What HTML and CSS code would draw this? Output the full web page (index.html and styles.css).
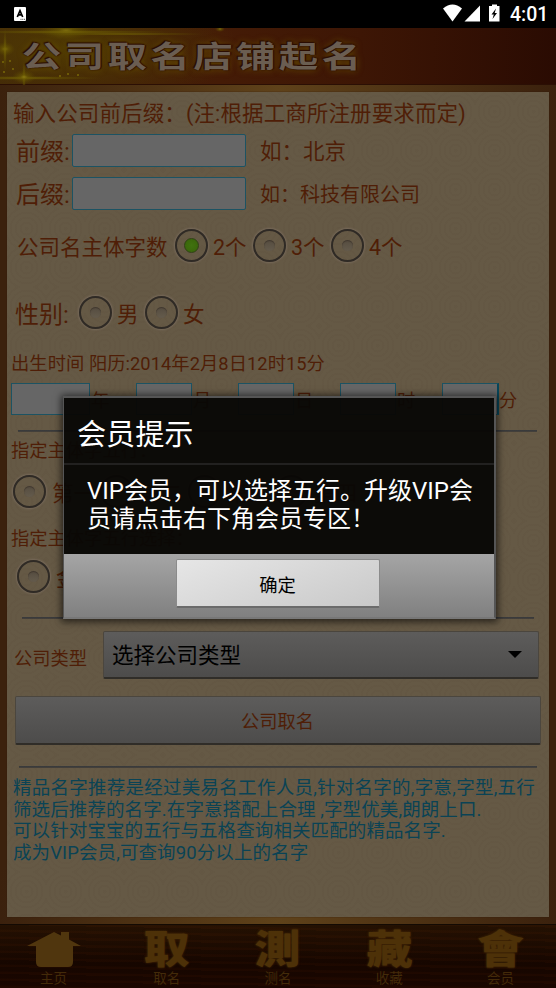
FILE: index.html
```html
<!DOCTYPE html>
<html lang="zh-CN">
<head>
<meta charset="utf-8">
<title>公司取名店铺起名</title>
<link rel="stylesheet" href="styles.css">
</head>
<body>
<div class="screen">
  <div class="status">
    <svg class="ime" width="12" height="14" viewBox="0 0 12 14"><rect width="12" height="14" rx="1" fill="#fff"/><path d="M3.3 10 6 3.6 8.7 10M4.3 7.9h3.4" fill="none" stroke="#000" stroke-width="1.7"/><path d="M6.5 12.3h1m.8 0h1m.8 0h1" stroke="#333" stroke-width="1"/></svg>
    <svg class="sys" width="60" height="20" viewBox="0 0 60 20"><path d="M0 4.5Q9.500-3.500 19 4.500L9.500 17.500Z" fill="#fff"/><path d="M37 1.500V17.500H21.500Z" fill="#fff"/><path d="M46 2h3V.500h5V2h2.500v15.500H46Z" fill="#fff"/><path d="M53 4.500 48.500 10.500h2.300L49.500 15l4.500-6h-2.300Z" fill="#000"/></svg>
    <span class="clock">4:01</span>
  </div>
  <header class="head">
    <svg class="spark" width="240" height="57" viewBox="0 0 240 57">
      <defs>
        <radialGradient id="g"><stop offset="0" stop-color="#8a7a12"/><stop offset=".3" stop-color="#6b5a04" stop-opacity=".7"/><stop offset="1" stop-color="#5a4a00" stop-opacity="0"/></radialGradient>
      </defs>
      <ellipse cx="66" cy="3" rx="26" ry="9" fill="url(#g)"/>
      <ellipse cx="66" cy="4" rx="110" ry="2" fill="url(#g)"/>
      <ellipse cx="120" cy="6" rx="90" ry="1.500" fill="url(#g)"/>
      <ellipse cx="24" cy="50" rx="80" ry="2" fill="url(#g)"/>
      <ellipse cx="24" cy="49" rx="2" ry="16" fill="url(#g)"/>
      <ellipse cx="24" cy="49" rx="12" ry="7" fill="url(#g)"/>
      <ellipse cx="5" cy="21" rx="10" ry="7" fill="url(#g)"/>
      <ellipse cx="5" cy="22" rx="2" ry="22" fill="url(#g)"/>
      <ellipse cx="220" cy="1" rx="5" ry="3" fill="url(#g)"/>
      <g fill="#786809"><circle cx="3" cy="34" r="1"/><circle cx="10" cy="33" r="1"/><circle cx="13" cy="41" r="1"/><circle cx="4" cy="44" r="1"/><circle cx="60" cy="48" r="1"/><circle cx="68" cy="46" r="1"/><circle cx="78" cy="47" r="1"/></g>
    </svg>
    <h1 class="title">公司取名店铺起名</h1>
  </header>
  <main class="wood">
    <form class="panel">
      <p class="intro">输入公司前后缀：(注:根据工商所注册要求而定)</p>
      <div class="row name"><span class="lab">前缀:</span><span class="input"></span><span class="t22 hint">如：北京</span></div>
      <div class="row name second"><span class="lab">后缀:</span><span class="input"></span><span class="t20 hint">如：科技有限公司</span></div>
      <div class="row count"><span class="t22 cap">公司名主体字数</span>
        <i class="radio on"></i><span class="t22 opt">2个</span><i class="radio"></i><span class="t22 opt">3个</span><i class="radio"></i><span class="t22 opt">4个</span></div>
      <div class="row sex"><span class="lab">性别:</span>
        <i class="radio"></i><span class="t22 opt">男</span><i class="radio"></i><span class="t22 opt">女</span></div>
      <p class="t18 birth">出生时间 阳历:2014年2月8日12时15分</p>
      <div class="row date t18">
        <span class="cell year"><i class="input"></i>年</span><span class="cell"><i class="input"></i>月</span><span class="cell"><i class="input"></i>日</span><span class="cell"><i class="input"></i>时</span><span class="cell last"><i class="input"></i>分</span></div>
      <div class="rule r1"></div>
      <p class="t18 sub">指定主体字五行：</p>
      <div class="row pos"><i class="radio"></i><span class="t22">第一</span><i class="radio"></i><span class="t22">第二</span><i class="radio"></i><span class="t22">第三</span><i class="radio"></i><span class="t22">第四</span></div>
      <p class="t18 sub sub2">指定主体字五行选择：</p>
      <div class="row elem"><i class="radio"></i><span class="t22">金</span></div>
      <div class="rule r2"></div>
      <div class="row type"><span class="t18">公司类型</span>
        <div class="select"><span>选择公司类型</span><svg width="14" height="7" viewBox="0 0 14 7"><path d="M0 0h14L7 7Z" fill="#000"/></svg></div></div>
      <div class="submit t18">公司取名</div>
      <div class="rule r3"></div>
      <p class="note"><span class="wide">精品名字推荐是经过美易名工作人员,针对名字的,字意,字型,五行</span><br>筛选后推荐的名字.在字意搭配上合理 ,字型优美,朗朗上口.<br>可以针对宝宝的五行与五格查询相关匹配的精品名字.<br>成为VIP会员,可查询90分以上的名字</p>
    </form>
  </main>
  <nav class="tabs">
    <div class="tab home"><svg width="54" height="38" viewBox="0 0 54 38"><path d="M0 15 27 1l7 3.500V1h8v7.500L54 15h-8v16q0 5-5 5H14q-5 0-5-5V15Z" fill="#50360e"/></svg><small>主页</small></div>
    <div class="tab"><b>取</b><small>取名</small></div>
    <div class="tab"><b>測</b><small>测名</small></div>
    <div class="tab"><b>藏</b><small>收藏</small></div>
    <div class="tab"><b>會</b><small>会员</small></div>
  </nav>
  <div class="dialog">
    <div class="dtitle">会员提示</div>
    <div class="dmsg">VIP会员，可以选择五行。升级VIP会员请点击右下角会员专区！</div>
    <div class="dfoot"><div class="ok">确定</div></div>
  </div>
</div>
</body>
</html>
```
FILE: styles.css
```css
* { box-sizing: border-box; }
body { margin: 0; background: #000; font-family: Roboto, "Noto Sans CJK SC", sans-serif; }
p, h1 { margin: 0; font-weight: 400; }
.screen { position: relative; width: 556px; height: 988px; overflow: hidden; display: flex; flex-direction: column; }

.status { height: 28px; display: flex; align-items: center; padding: 0 11px 0 14px; color: #fff; }
.sys { margin-left: auto; }
.clock { font-size: 19.5px; font-weight: 500; margin-left: 7px; width: 35px; line-height: 28px; padding-top: 1px; white-space: nowrap; }

.head { height: 57px; position: relative; display: flex; align-items: center; padding-left: 22px;
  background: radial-gradient(ellipse 180px 60px at 60px 20px, #4f3a03, rgba(79,58,3,0)), linear-gradient(90deg, #40250a, #441b06 40%, #3d1605 65%, #2a0b02);
  border-bottom: 1px solid #2b0f04; }
.spark { position: absolute; left: 0; top: 0; }
.title { position: relative; font-size: 34px; line-height: 44px; font-weight: 700; letter-spacing: 2.9px; white-space: nowrap;
  transform: scale(1.16, .88); transform-origin: 0 50%;
  color: #6a5d51; text-shadow: 0 0 2px #2a0d04, 1px 1px 1px #2a0d04, -1px -1px 1px #2a0d04, 0 0 7px #6a5203; }

.wood { height: 839px; padding: 7px; background: linear-gradient(#0000 12px, #3b210d 60px, #3b210d 780px, #0000 828px) 0 0 / 7px 100% no-repeat, linear-gradient(#0000 12px, #3b210d 60px, #3b210d 780px, #0000 828px) 100% 0 / 7px 100% no-repeat, linear-gradient(90deg, #3b210d, #5f421a 50%, #3b210d); }
.panel { height: 825px; padding: 0 4px; color: #4f1e07; box-shadow: 0 0 1px #2f1b0c;
  background: repeating-radial-gradient(circle at 50% 50%, rgba(50,35,15,.03) 0 2px, rgba(0,0,0,0) 2px 5px) 0 0 / 39px 39px, #655945; }
.t18, .t20, .t22 { white-space: nowrap; }
.t18 { font-size: 18.3px; }
.t20 { font-size: 20px; }
.t22 { font-size: 21.5px; }
.lab { font-size: 24px; white-space: nowrap; }
.row { display: flex; align-items: center; }
.intro { height: 42px; line-height: 43px; padding-left: 2px; font-size: 21.5px; letter-spacing: .12px; white-space: nowrap; }
.input { display: block; background: #666; border: 1px solid #1c5363; border-radius: 2px; }
.name { height: 33px; }
.name .lab { width: 61px; padding-left: 5px; margin-top: -2px; }
.name .input { width: 174px; height: 33px; }
.name .hint { margin-left: 14px; margin-top: -2px; }
.second { margin-top: 10px; }
.second .hint { margin-top: 0; }

.radio { flex: none; width: 33px; height: 33px; border-radius: 50%; border: 2px solid #2f2a25; box-shadow: 0 0 2px 1px #77695a; display: flex; align-items: center; justify-content: center; }
.radio::before { content: ""; width: 11px; height: 11px; border-radius: 50%; background: linear-gradient(#554c40, #645b4c); box-shadow: inset 0 1px 1px #40382e; }
.radio.on::before { width: 13px; height: 13px; background: radial-gradient(#40720f, #386309); border: 1px solid #304216; box-shadow: none; }
.count { height: 35px; margin-top: 18px; }
.count .cap { width: 164px; padding-left: 6px; }
.opt { padding-left: 5px; }
.count .opt { width: 45px; }
.sex { height: 35px; margin-top: 32px; }
.sex .lab { width: 68px; padding-left: 4px; }
.sex .opt { width: 33px; }
.birth { margin-top: 23px; height: 22px; line-height: 22px; letter-spacing: .05px; }
.date { margin-top: 7px; height: 33px; }
.cell { display: flex; align-items: center; width: 102px; padding-top: 1px; }
.cell.year { width: 125px; }
.cell .input { width: 56px; height: 32px; margin: -1px 1px 0 0; border-radius: 0; }
.cell.year .input { width: 79px; }
.cell.last .input { width: 57px; border-right: 2px solid #07465a; margin-right: 0; }
.rule { height: 2px; background: linear-gradient(#35383c, #47413a); }
.r1 { margin: 15px 8px 0 7px; }
.sub { margin-top: 8px; height: 22px; line-height: 22px; }
.pos { height: 34px; margin-top: 12px; padding-left: 2px; }
.pos .t22 { width: 54.3px; padding-left: 6px; }
.sub2 { margin-top: 20px; }
.elem { height: 34px; margin-top: 9px; padding-left: 6px; }
.elem .t22 { padding-left: 6px; }
.r2 { margin: 24px 11px 0; }
.type { margin-top: 12px; height: 48px; padding-left: 3px; }
.type > .t18 { width: 89px; padding-top: 3px; }
.select, .submit { background: linear-gradient(#5d5c5b, #4d4c4b); border: 1px solid #4b463e; border-bottom: 2px solid #302d28; border-radius: 2px; display: flex; align-items: center; }
.select { width: 436px; height: 48px; justify-content: space-between; padding: 0 16px 0 8px; font-size: 21.5px; color: #000; }
.select span { margin-top: -3px; }
.submit { margin: 17px 4px 0; height: 49px; justify-content: center; width: 526px; padding: 0 1px 1px 0; }
.r3 { margin: 21px 8px 0; }
.note { margin-top: 10px; padding-left: 2px; color: #0a4355; font-size: 18.5px; line-height: 21.7px; letter-spacing: .1px; white-space: nowrap; }
.wide { letter-spacing: .26px; }

.tabs { height: 64px; display: flex; justify-content: space-between; border-top: 1px solid #130a03; color: #4d3108;
  background: repeating-linear-gradient(1deg, rgba(60,20,0,.12) 0 2px, rgba(0,0,0,.12) 3px 7px), linear-gradient(#291302, #190700 60%, #1d0700); }
.tab { width: 111.2px; display: flex; flex-direction: column; align-items: center; padding-top: 6px; }
.home { padding-right: 4px; }
.tab svg { height: 38px; }
.tab b { font-weight: 900; font-size: 39px; line-height: 38px; height: 38px; transform: scaleX(1.18); text-shadow: 0 0 2px #4d3108; }
.tab small { font-size: 13.5px; line-height: 18px; color: #432a09; }

.dialog { position: absolute; left: 63px; top: 396px; width: 433px; height: 223px; border: 2px solid #555; border-bottom-color: #777; border-left-width: 1px; box-shadow: 0 1px 7px 2px rgba(0,0,0,.6); color: #fff; display: flex; flex-direction: column; background: rgba(8,7,5,.955); background-clip: padding-box; }
.dtitle { height: 67px; line-height: 74px; padding-left: 13px; font-size: 29.1px; border-bottom: 2px solid #222120; }
.dmsg { flex: 1; padding: 12px 18px 0 23px; font-size: 24px; line-height: 28px; word-break: break-all; }
.dfoot { height: 63px; padding: 5px 2px 0 0; background: linear-gradient(#a5a5a5, #808080); display: flex; justify-content: center; }
.ok { width: 204px; height: 49px; background: linear-gradient(160deg, #e6e6e6, #c9c9c9); border: 1px solid #8b8b8b; border-bottom: 2px solid #6b6b6b; border-radius: 2px; color: #000; font-size: 18.3px; display: flex; align-items: center; justify-content: center; padding: 2px 1px 0 0; }
```
